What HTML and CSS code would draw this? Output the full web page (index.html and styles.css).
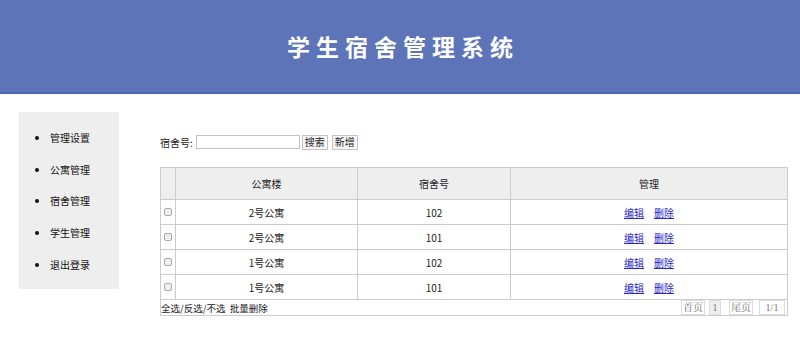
FILE: index.html
```html
<!DOCTYPE html>
<html lang="zh-CN">
<head>
    <meta charset="UTF-8">
    <title>学生宿舍管理系统</title>
    <link rel="stylesheet" href="styles.css">
</head>
<body>
    <div class="header">
        <h1>学生宿舍管理系统</h1>
    </div>
    <div class="main">
        <ul class="sidebar">
            <li>管理设置</li>
            <li>公寓管理</li>
            <li>宿舍管理</li>
            <li>学生管理</li>
            <li>退出登录</li>
        </ul>
        <div class="content">
            <form class="search">
                <label for="room">宿舍号:</label>
                <input type="text" id="room">
                <button type="button" class="btn">搜索</button>
                <button type="button" class="btn">新增</button>
            </form>
            <table class="list">
                <thead>
                    <tr>
                        <th class="chk"></th>
                        <th class="col-bldg">公寓楼</th>
                        <th class="col-room">宿舍号</th>
                        <th>管理</th>
                    </tr>
                </thead>
                <tbody>
                    <tr>
                        <td class="chk"><input type="checkbox"></td>
                        <td>2号公寓</td>
                        <td>102</td>
                        <td><a href="#">编辑</a><a href="#">删除</a></td>
                    </tr>
                    <tr>
                        <td class="chk"><input type="checkbox"></td>
                        <td>2号公寓</td>
                        <td>101</td>
                        <td><a href="#">编辑</a><a href="#">删除</a></td>
                    </tr>
                    <tr>
                        <td class="chk"><input type="checkbox"></td>
                        <td>1号公寓</td>
                        <td>102</td>
                        <td><a href="#">编辑</a><a href="#">删除</a></td>
                    </tr>
                    <tr>
                        <td class="chk"><input type="checkbox"></td>
                        <td>1号公寓</td>
                        <td>101</td>
                        <td><a href="#">编辑</a><a href="#">删除</a></td>
                    </tr>
                </tbody>
                <tfoot>
                    <tr>
                        <td colspan="4">
                            <div class="foot">
                                <span class="bulk">全选/反选/不选&nbsp; 批量删除</span>
                                <span class="pager">
                                    <span class="page wide">首页</span>
                                    <span class="page current">1</span>
                                    <span class="page wide last">尾页</span>
                                    <span class="page total">1/1</span>
                                </span>
                            </div>
                        </td>
                    </tr>
                </tfoot>
            </table>
        </div>
    </div>
</body>
</html>
```

FILE: styles.css
```css
* {
    margin: 0;
    padding: 0;
    box-sizing: border-box;
}

body {
    font-family: "Noto Sans CJK SC", "Liberation Sans", sans-serif;
    font-size: 10px;
    color: #222;
    background: #fff;
}

.header {
    height: 94px;
    background-color: #5d75b8;
    border-bottom: 2px solid #4b68bd;
    display: flex;
    justify-content: center;
    align-items: center;
}

.header h1 {
    color: #fff;
    font-size: 23px;
    font-weight: bold;
    letter-spacing: 6px;
    padding-left: 6px;
    padding-bottom: 1px;
}

.main {
    display: flex;
    padding: 18px 12px 0 19px;
}

.sidebar {
    width: 100px;
    height: 177px;
    background-color: #eee;
    padding: 18px 0 0 31px;
    list-style: disc;
    color: #111;
    font-size: 10px;
}

.sidebar li {
    height: 31.7px;
    line-height: 16px;
}

.content {
    flex: 1;
    margin-left: 41px;
    padding-top: 22px;
}

.search {
    display: flex;
    align-items: center;
    height: 16px;
}

.search label {
    margin-right: 3px;
}

.search input {
    width: 104px;
    height: 14px;
    border: 1px solid #c4c4c4;
    margin-right: 2px;
}

.btn {
    font-family: inherit;
    font-size: 10px;
    height: 15px;
    line-height: 12px;
    padding: 0 2px;
    margin-right: 4px;
    background: #f7f7f7;
    border: 1px solid #c4c4c4;
    color: #222;
}

.list {
    width: 100%;
    margin-top: 17px;
    border-collapse: collapse;
    border: 1px solid #ccc;
}

.list th,
.list td {
    border: 1px solid #ccc;
    text-align: center;
    font-weight: normal;
    color: #222;
}

.list th {
    height: 32px;
    background-color: #eee;
}

.list tbody td {
    height: 25px;
}

.list .chk {
    width: 15px;
}

.list .col-bldg {
    width: 182px;
}

.list .col-room {
    width: 153px;
}

.chk input {
    appearance: none;
    display: block;
    margin: 0 auto;
    width: 8px;
    height: 8px;
    border: 1px solid #aaa;
    border-radius: 2px;
    background-color: #eee;
}

.list a {
    color: #2a27c8;
    margin: 0 5px;
}

.list tfoot td {
    height: 16px;
    text-align: left;
}

.foot {
    display: flex;
    justify-content: space-between;
    align-items: center;
}

.bulk {
    font-size: 9.5px;
}

.pager {
    display: flex;
    gap: 4px;
    padding-right: 2px;
    font-family: "Liberation Serif", "Noto Serif CJK SC", serif;
    font-size: 10px;
    color: #777;
}

.page {
    border: 1px solid #ddd;
    line-height: 13px;
    text-align: center;
}

.page.wide {
    width: 24px;
}

.page.current {
    width: 12px;
    background-color: #eee;
    margin-right: 4px;
}

.page.last {
    margin-right: 2px;
}

.page.total {
    width: 26px;
}
```
